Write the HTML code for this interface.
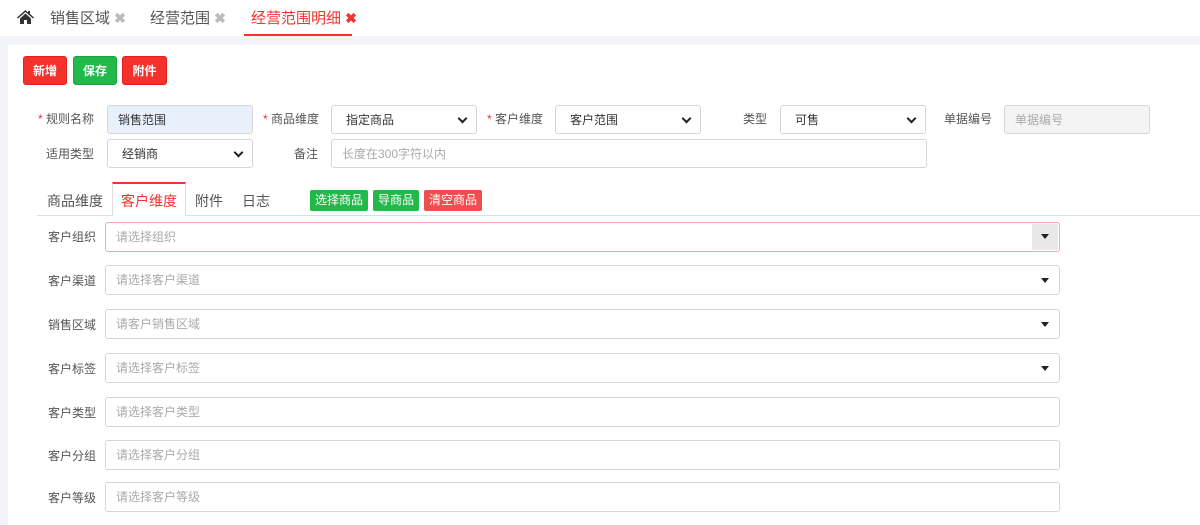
<!DOCTYPE html>
<html><head><meta charset="utf-8"><style>
*{margin:0;padding:0;box-sizing:border-box}
body{width:1200px;height:525px;overflow:hidden;background:#f3f4f8;font-family:"Liberation Sans","Noto Sans CJK SC",sans-serif;position:relative;color:#333}
.a{position:absolute}
.top{left:0;top:0;width:1200px;height:36px;background:#fff}
.panel{left:8px;top:45px;width:1192px;height:480px;background:#fff}
.tab{font-size:15px;color:#555;top:7px}
.x{font-size:14px;color:#bbb;font-weight:bold}
.btn{height:29px;border-radius:3px;color:#fff;font-size:12px;font-weight:bold;text-align:center;line-height:29px;top:56px}
.red{background:#f5312c;border:1px solid #e02020}
.grn{background:#22b94b;border:1px solid #1ea040}
.lbl{font-size:12px;color:#555;text-align:right}
.st{color:#f5312c}
.inp{border:1px solid #d6d6d6;border-radius:3px;height:29px;font-size:12px;line-height:28px;padding-left:14px;background:#fff}
.sel::after{content:"";position:absolute;right:10px;top:9px;width:5px;height:5px;border-right:2px solid #222;border-bottom:2px solid #222;transform:rotate(45deg)}
.ph{color:#aaa}
.t2{font-size:14px;color:#555;top:191px}
.sb{height:21px;border-radius:2px;color:#fff;font-size:12px;line-height:21px;text-align:center;top:190px}
.row{left:105px;width:955px;height:30px;border:1px solid #d6d6d6;border-radius:3px;font-size:12px;color:#aaa;line-height:29px;padding-left:10px}
.rl{left:20px;width:76px;font-size:12px;color:#555;text-align:right}
.tri::after{content:"";position:absolute;right:10px;top:12px;border-left:4px solid transparent;border-right:4px solid transparent;border-top:5px solid #222}
</style></head><body>
<div class="a top"></div>
<svg class="a" style="left:17px;top:10px" width="17" height="14" viewBox="0 0 17 14"><path d="M8.5 0L0 7.5l1 1L8.5 2l7.5 6.5 1-1L13 4V1h-2v1.5z" fill="#333"/><path d="M3 8.5L8.5 3.5 14 8.5V14h-4V10H7v4H3z" fill="#333"/></svg>
<div class="a tab" style="left:50px">销售区域 <span class="x">✖</span></div>
<div class="a tab" style="left:150px">经营范围 <span class="x">✖</span></div>
<div class="a tab" style="left:251px;color:#f5312c">经营范围明细 <span class="x" style="color:#f5312c">✖</span></div>
<div class="a" style="left:244px;top:34px;width:108px;height:2px;background:#f5312c"></div>
<div class="a panel"></div>
<div class="a btn red" style="left:23px;width:44px">新增</div>
<div class="a btn grn" style="left:73px;width:44px">保存</div>
<div class="a btn red" style="left:122px;width:45px">附件</div>

<div class="a lbl" style="left:30px;top:110px;width:64px"><span class="st">* </span>规则名称</div>
<div class="a inp" style="left:107px;top:105px;width:146px;background:#e8f0fc;color:#333;padding-left:10px">销售范围</div>
<div class="a lbl" style="left:255px;top:110px;width:64px"><span class="st">* </span>商品维度</div>
<div class="a inp sel" style="left:331px;top:105px;width:146px">指定商品</div>
<div class="a lbl" style="left:480px;top:110px;width:63px"><span class="st">* </span>客户维度</div>
<div class="a inp sel" style="left:555px;top:105px;width:146px">客户范围</div>
<div class="a lbl" style="left:720px;top:110px;width:47px">类型</div>
<div class="a inp sel" style="left:780px;top:105px;width:146px;padding-left:14px">可售</div>
<div class="a lbl" style="left:935px;top:110px;width:57px">单据编号</div>
<div class="a inp ph" style="left:1004px;top:105px;width:146px;background:#f4f4f4;padding-left:10px">单据编号</div>

<div class="a lbl" style="left:30px;top:145px;width:64px">适用类型</div>
<div class="a inp sel" style="left:107px;top:139px;width:146px">经销商</div>
<div class="a lbl" style="left:260px;top:145px;width:58px">备注</div>
<div class="a inp ph" style="left:331px;top:139px;width:596px;padding-left:10px">长度在300字符以内</div>

<div class="a" style="left:37px;top:215px;width:1163px;height:1px;background:#ddd"></div>
<div class="a" style="left:112px;top:182px;width:74px;height:34px;background:#fff;border:1px solid #ddd;border-top:2px solid #f5312c;border-bottom:none"></div>
<div class="a t2" style="left:47px">商品维度</div>
<div class="a t2" style="left:121px;color:#f5312c">客户维度</div>
<div class="a t2" style="left:195px">附件</div>
<div class="a t2" style="left:242px">日志</div>
<div class="a sb" style="left:310px;width:58px;background:#22b94b">选择商品</div>
<div class="a sb" style="left:373px;width:46px;background:#22b94b">导商品</div>
<div class="a sb" style="left:424px;width:58px;background:#ef4e4e">清空商品</div>

<div class="a rl" style="top:228px">客户组织</div>
<div class="a row" style="top:222px;border-color:#f4a9b0"><span>请选择组织</span><div class="a" style="right:1px;top:1px;width:26px;height:26px;background:#e8e8e8"></div><div class="a" style="right:10px;top:11px;border-left:4px solid transparent;border-right:4px solid transparent;border-top:5px solid #222"></div></div>
<div class="a rl" style="top:272px">客户渠道</div>
<div class="a row tri" style="top:265px">请选择客户渠道</div>
<div class="a rl" style="top:316px">销售区域</div>
<div class="a row tri" style="top:309px">请客户销售区域</div>
<div class="a rl" style="top:360px">客户标签</div>
<div class="a row tri" style="top:353px">请选择客户标签</div>
<div class="a rl" style="top:404px">客户类型</div>
<div class="a row" style="top:397px">请选择客户类型</div>
<div class="a rl" style="top:447px">客户分组</div>
<div class="a row" style="top:440px">请选择客户分组</div>
<div class="a rl" style="top:489px">客户等级</div>
<div class="a row" style="top:482px">请选择客户等级</div>
</body></html>
